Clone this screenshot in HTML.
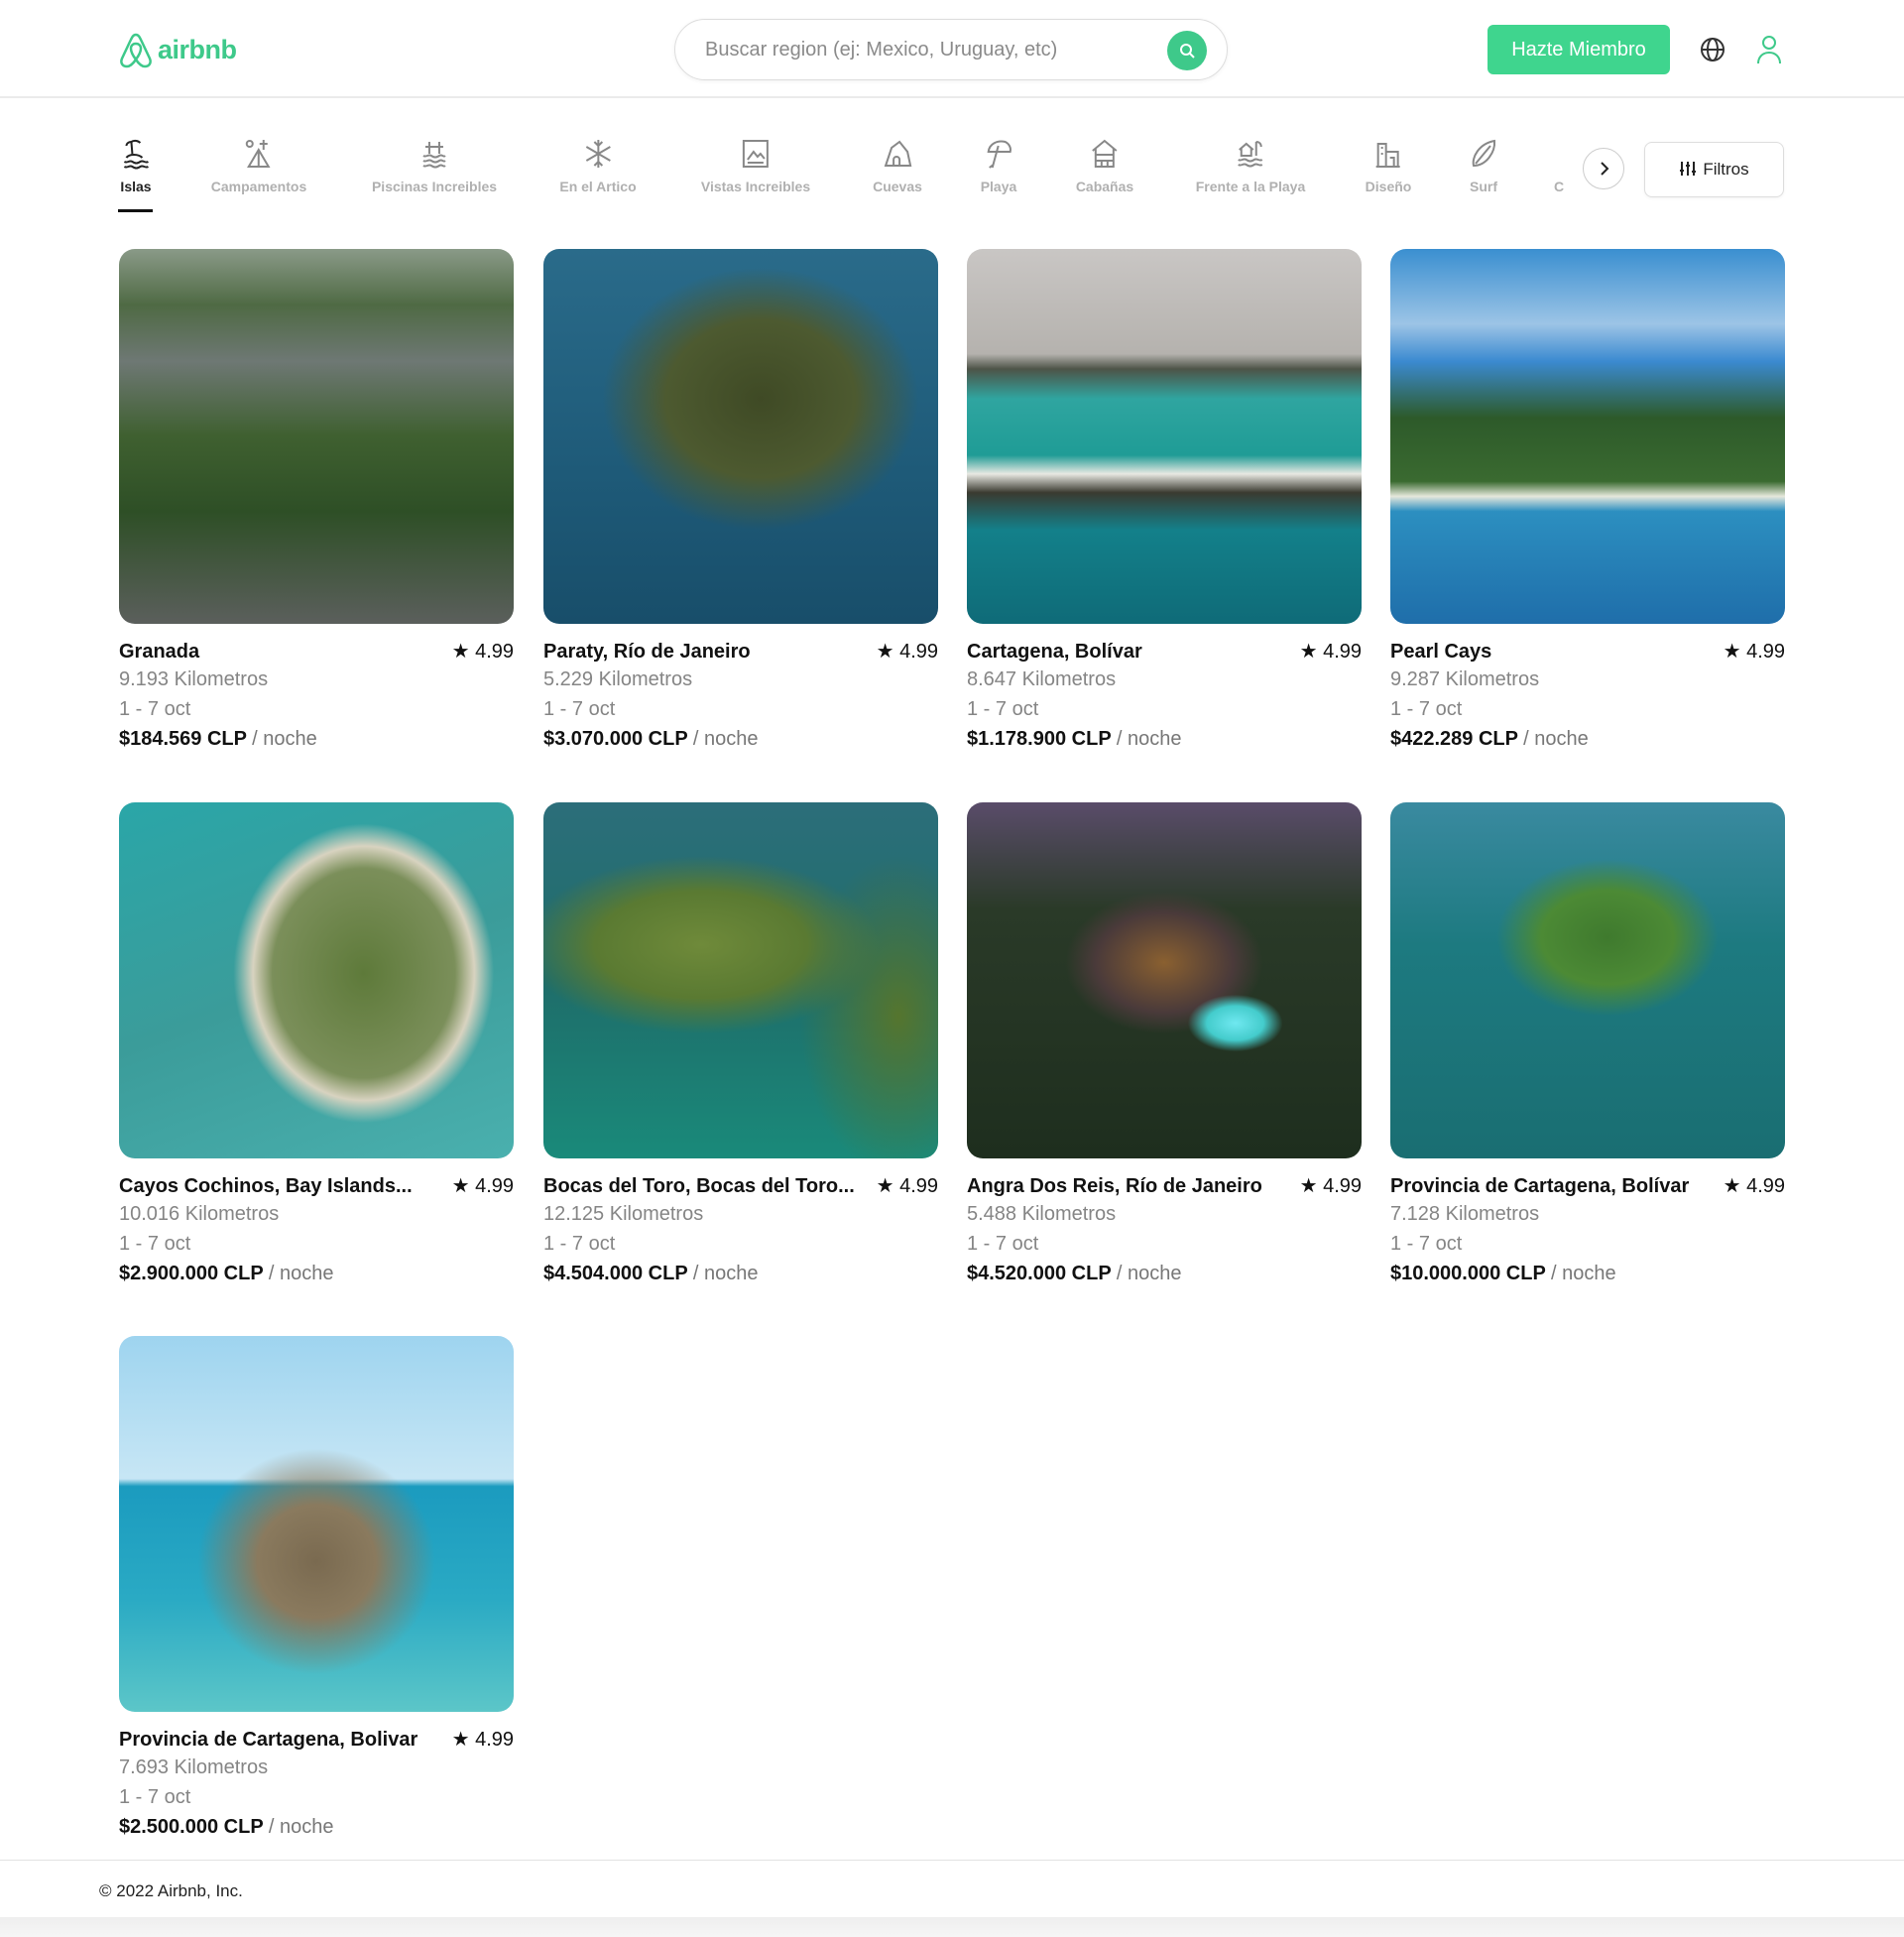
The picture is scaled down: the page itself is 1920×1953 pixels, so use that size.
<!DOCTYPE html>
<html><head><meta charset="utf-8"><style>
*{margin:0;padding:0;box-sizing:border-box}
body{width:1920px;height:1953px;background:#fff;font-family:"Liberation Sans",sans-serif;position:relative;overflow:hidden;color:#222}
.hdr{position:absolute;left:0;top:0;width:1920px;height:99px;border-bottom:2px solid #ebebeb}
.logo{position:absolute;left:119px;top:31px;display:flex;align-items:center;color:#3ec98a;font-weight:bold;font-size:27px;letter-spacing:-0.5px}
.search{position:absolute;left:680px;top:19px;width:558px;height:62px;border:1px solid #ddd;border-radius:31px;box-shadow:0 1px 4px rgba(0,0,0,.06)}
.search span{position:absolute;left:30px;top:19px;font-size:20px;color:#8a8a8a}
.sbtn{position:absolute;right:20px;top:11px;width:40px;height:40px;border-radius:50%;background:#3ec98a}
.member{position:absolute;left:1500px;top:25px;width:184px;height:50px;background:#3fd58e;border-radius:6px;color:#fff;font-size:20px;text-align:center;line-height:50px}
.cat{position:absolute;top:139px;transform:translateX(-50%);text-align:center;font-size:14px;font-weight:bold;color:#b0b0b0;white-space:nowrap}
.cat svg{display:block;margin:0 auto 9px}
.cat.on{color:#222}
.card{position:absolute;width:398px}
.img{width:398px;border-radius:16px;overflow:hidden;position:relative}
.t{display:flex;justify-content:space-between;align-items:baseline;font-size:20px;font-weight:bold;color:#111;margin-top:15px;height:30px}
.t b{font-weight:normal}
.g{font-size:20px;color:#858585;height:30px}
.p{font-size:20px;font-weight:bold;color:#111}
.p span{font-weight:normal;color:#777}
</style></head><body>
<div class="hdr">
 <div class="logo"><svg width="36" height="38" viewBox="0 0 36 38" fill="none" stroke="#3ec98a" stroke-width="2.5"><path d="M18 4c-3 0-4 3-6 7L4 28c-2 5 1 8 5 8 4 0 7-4 9-7 2 3 5 7 9 7 4 0 7-3 5-8L24 11c-2-4-3-7-6-7z"/><path d="M18 29c-3-4-5-8-5-11 0-3 2-5 5-5s5 2 5 5c0 3-2 7-5 11z"/></svg><span style="margin-left:4px">airbnb</span></div>
 <div class="search"><span>Buscar region (ej: Mexico, Uruguay, etc)</span><div class="sbtn"><svg width="40" height="40" viewBox="0 0 40 40" fill="none" stroke="#fff" stroke-width="2"><circle cx="19" cy="19" r="5"/><path d="M23 23l4 4"/></svg></div></div>
 <div class="member">Hazte Miembro</div>
 <svg style="position:absolute;left:1714px;top:37px" width="26" height="26" viewBox="0 0 26 26" fill="none" stroke="#333" stroke-width="2"><circle cx="13" cy="13" r="11"/><ellipse cx="13" cy="13" rx="5" ry="11"/><path d="M2 13h22"/></svg>
 <svg style="position:absolute;left:1771px;top:35px" width="26" height="30" viewBox="0 0 26 30" fill="none" stroke="#3ec98a" stroke-width="2"><circle cx="13" cy="8" r="6"/><path d="M2 29c0-7 5-11 11-11s11 4 11 11"/></svg>
</div>

<div class="cat on" style="left:137px"><svg width="30" height="32" viewBox="0 0 30 32" fill="none" stroke="#222" stroke-width="2"><path d="M10 4c3-2 7-1 9 1M10 4c-3 0-5 2-5 4M10 4l1 12M5 20c3-4 12-4 16 0M3 24c3 2 5-2 8 0s5 2 8 0 5 2 8 0M3 29c3 2 5-2 8 0s5 2 8 0 5 2 8 0"/></svg>Islas</div>
<div style="position:absolute;left:119px;top:211px;width:35px;height:3px;background:#111"></div>
<div class="cat" style="left:261px"><svg width="30" height="32" viewBox="0 0 30 32" fill="none" stroke="#888" stroke-width="2"><circle cx="6" cy="6" r="3"/><path d="M20 2v10M16 6h8M15 12l-10 17h20zM15 12v17"/></svg>Campamentos</div>
<div class="cat" style="left:438px"><svg width="30" height="32" viewBox="0 0 30 32" fill="none" stroke="#888" stroke-width="2"><path d="M10 4v12M20 4v12M6 9h18M4 18c3 2 5-2 8 0s5 2 8 0 4 2 6 0M4 23c3 2 5-2 8 0s5 2 8 0 4 2 6 0M4 28c3 2 5-2 8 0s5 2 8 0 4 2 6 0"/></svg>Piscinas Increibles</div>
<div class="cat" style="left:603px"><svg width="30" height="32" viewBox="0 0 30 32" fill="none" stroke="#888" stroke-width="2"><path d="M15 2v28M3 9l24 14M3 23l24-14M11 4l4 4 4-4M11 28l4-4 4 4"/></svg>En el Artico</div>
<div class="cat" style="left:762px"><svg width="30" height="32" viewBox="0 0 30 32" fill="none" stroke="#888" stroke-width="2"><rect x="3" y="3" width="24" height="26"/><path d="M7 22l6-8 4 5 3-3 4 5M7 25h16"/></svg>Vistas Increibles</div>
<div class="cat" style="left:905px"><svg width="30" height="32" viewBox="0 0 30 32" fill="none" stroke="#888" stroke-width="2"><path d="M3 28l6-18 8-6 8 10 3 14zM11 28v-6a3 3 0 016 0v6"/></svg>Cuevas</div>
<div class="cat" style="left:1007px"><svg width="30" height="32" viewBox="0 0 30 32" fill="none" stroke="#888" stroke-width="2"><path d="M5 14C6 6 14 2 22 4c4 2 6 6 5 10zM15 8l-6 22M10 27l-4 3"/></svg>Playa</div>
<div class="cat" style="left:1114px"><svg width="30" height="32" viewBox="0 0 30 32" fill="none" stroke="#888" stroke-width="2"><path d="M3 13L15 3l12 10M6 11v18h18V11M6 17h18M6 23h18M12 29v-6h6v6"/></svg>Cabañas</div>
<div class="cat" style="left:1261px"><svg width="30" height="32" viewBox="0 0 30 32" fill="none" stroke="#888" stroke-width="2"><path d="M4 12l7-6 7 6M6 10v8h10v-8M21 4c3 0 5 2 5 5M21 4v14M3 22c3 2 5-2 8 0s5 2 8 0 5 2 8 0M3 27c3 2 5-2 8 0s5 2 8 0 5 2 8 0"/></svg>Frente a la Playa</div>
<div class="cat" style="left:1400px"><svg width="30" height="32" viewBox="0 0 30 32" fill="none" stroke="#888" stroke-width="2"><path d="M3 29h24M5 29V6h8v23M13 14h12v15M17 20h4v9M8 10h2M8 16h2"/></svg>Diseño</div>
<div class="cat" style="left:1496px"><svg width="30" height="32" viewBox="0 0 30 32" fill="none" stroke="#888" stroke-width="2"><path d="M5 28C3 20 10 6 26 3 27 14 18 28 5 28zM7 26L22 8"/></svg>Surf</div>
<div class="cat" style="left:1572px;top:180px;width:10px;overflow:hidden">C</div>
<div style="position:absolute;left:1596px;top:149px;width:42px;height:42px;border:1px solid #ccc;border-radius:50%;background:#fff"><svg width="40" height="40" viewBox="0 0 40 40" fill="none" stroke="#222" stroke-width="2"><path d="M18 14l6 6-6 6"/></svg></div>
<div style="position:absolute;left:1658px;top:143px;width:141px;height:56px;border:1px solid #ddd;border-radius:8px;font-size:17px;line-height:54px;text-align:center;color:#222;box-shadow:0 1px 3px rgba(0,0,0,.05)"><svg width="18" height="16" viewBox="0 0 18 16" fill="none" stroke="#222" stroke-width="2" style="vertical-align:-2px;margin-right:6px"><path d="M3 1v14M9 1v14M15 1v14M1 10h4M7 5h4M13 11h4"/></svg>Filtros</div>

<div class="card" style="left:120px;top:251px"><div class="img" style="height:378px;background:linear-gradient(180deg,#8a9a88 0%,#4f6a44 15%,#6e7874 30%,#3f6030 50%,#2e4f26 70%,#5b5f5c 100%)"></div>
<div class="t">Granada<b>★ 4.99</b></div><div class="g">9.193 Kilometros</div><div class="g">1 - 7 oct</div><div class="p">$184.569 CLP <span>/ noche</span></div></div>
<div class="card" style="left:548px;top:251px"><div class="img" style="height:378px;background:radial-gradient(ellipse 40% 35% at 55% 40%,#3f4a25 0%,#4d5a30 60%,transparent 100%),linear-gradient(180deg,#2a6b8a,#1e5a78 60%,#184e6a)"></div>
<div class="t">Paraty, Río de Janeiro<b>★ 4.99</b></div><div class="g">5.229 Kilometros</div><div class="g">1 - 7 oct</div><div class="p">$3.070.000 CLP <span>/ noche</span></div></div>
<div class="card" style="left:975px;top:251px"><div class="img" style="height:378px;background:linear-gradient(180deg,#c9c6c4 0%,#b5b2ae 28%,#4e5448 32%,#2fa5a0 40%,#1f9c96 55%,#e8e8e2 60%,#3a3a30 65%,#13808a 75%,#0f6b78 100%)"></div>
<div class="t">Cartagena, Bolívar<b>★ 4.99</b></div><div class="g">8.647 Kilometros</div><div class="g">1 - 7 oct</div><div class="p">$1.178.900 CLP <span>/ noche</span></div></div>
<div class="card" style="left:1402px;top:251px"><div class="img" style="height:378px;background:linear-gradient(180deg,#3a8fd0 0%,#9cc4e6 20%,#3b8ad0 30%,#2d5a2a 45%,#3a6a30 62%,#e6e8dc 66%,#2c8fc0 70%,#1f6eaa 100%)"></div>
<div class="t">Pearl Cays<b>★ 4.99</b></div><div class="g">9.287 Kilometros</div><div class="g">1 - 7 oct</div><div class="p">$422.289 CLP <span>/ noche</span></div></div>

<div class="card" style="left:120px;top:809px"><div class="img" style="height:359px;background:radial-gradient(ellipse 33% 42% at 62% 48%,#5e7a3a 0%,#7b8f5a 70%,#d8d3c0 85%,transparent 100%),linear-gradient(160deg,#2aa6a8,#3b9c9a 50%,#4ab0ae)"></div>
<div class="t">Cayos Cochinos, Bay Islands...<b>★ 4.99</b></div><div class="g">10.016 Kilometros</div><div class="g">1 - 7 oct</div><div class="p">$2.900.000 CLP <span>/ noche</span></div></div>
<div class="card" style="left:548px;top:809px"><div class="img" style="height:359px;background:radial-gradient(ellipse 45% 25% at 40% 40%,#6f8a3a 0%,#5a7a32 60%,transparent 100%),radial-gradient(ellipse 25% 45% at 90% 60%,#55752e 0%,transparent 100%),linear-gradient(180deg,#2c6e7a,#1e6d6a 50%,#1a8a7a)"></div>
<div class="t">Bocas del Toro, Bocas del Toro...<b>★ 4.99</b></div><div class="g">12.125 Kilometros</div><div class="g">1 - 7 oct</div><div class="p">$4.504.000 CLP <span>/ noche</span></div></div>
<div class="card" style="left:975px;top:809px"><div class="img" style="height:359px;background:radial-gradient(ellipse 12% 8% at 68% 62%,#6fe8f0 0%,#4cc 60%,transparent 100%),radial-gradient(ellipse 25% 20% at 50% 45%,#8a6030 0%,#4a3a3a 70%,transparent 100%),linear-gradient(180deg,#5a4c6a,#2a3a28 30%,#1e2e1e 100%)"></div>
<div class="t">Angra Dos Reis, Río de Janeiro<b>★ 4.99</b></div><div class="g">5.488 Kilometros</div><div class="g">1 - 7 oct</div><div class="p">$4.520.000 CLP <span>/ noche</span></div></div>
<div class="card" style="left:1402px;top:809px"><div class="img" style="height:359px;background:radial-gradient(ellipse 28% 22% at 55% 38%,#3f7a2e 0%,#4c8a35 60%,transparent 100%),linear-gradient(180deg,#3a8aa0,#1d7a80 40%,#1a6e72)"></div>
<div class="t">Provincia de Cartagena, Bolívar<b>★ 4.99</b></div><div class="g">7.128 Kilometros</div><div class="g">1 - 7 oct</div><div class="p">$10.000.000 CLP <span>/ noche</span></div></div>

<div class="card" style="left:120px;top:1347px"><div class="img" style="height:379px;background:radial-gradient(ellipse 30% 30% at 50% 60%,#7a6a50 0%,#8a7a5e 50%,transparent 100%),linear-gradient(180deg,#9ed4ef 0%,#c7e6f5 38%,#1b9bbf 40%,#2aaac4 70%,#5cc6c8 100%)"></div>
<div class="t">Provincia de Cartagena, Bolivar<b>★ 4.99</b></div><div class="g">7.693 Kilometros</div><div class="g">1 - 7 oct</div><div class="p">$2.500.000 CLP <span>/ noche</span></div></div>

<div style="position:absolute;left:0;top:1875px;width:1920px;height:58px;border-top:1px solid #e2e2e2"><div style="position:absolute;left:100px;top:21px;font-size:17px;color:#222">© 2022 Airbnb, Inc.</div></div>
<div style="position:absolute;left:0;top:1933px;width:1920px;height:20px;background:linear-gradient(#eee,#f6f6f6)"></div>
</body></html>
